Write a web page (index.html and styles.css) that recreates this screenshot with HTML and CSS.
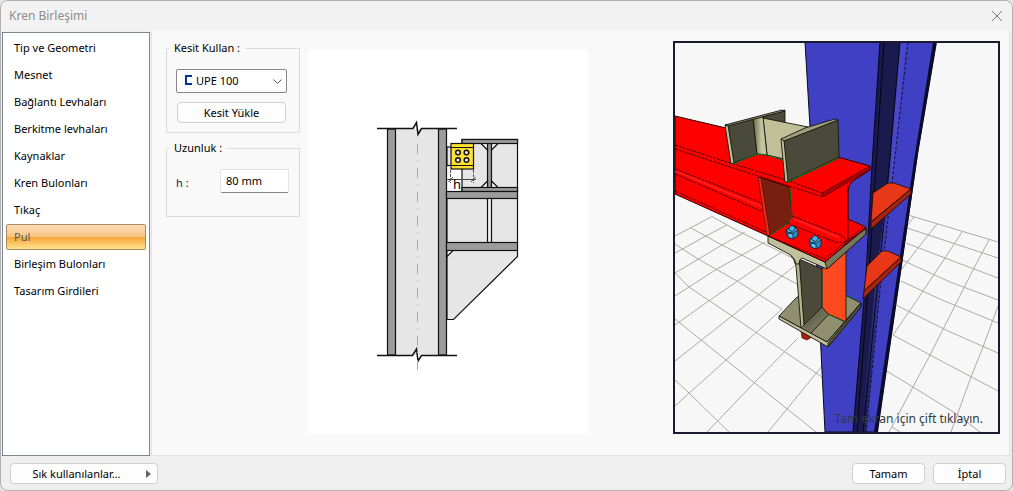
FILE: index.html
```html
<!DOCTYPE html>
<html lang="tr">
<head>
<meta charset="utf-8">
<title>Kren Birleşimi</title>
<link rel="stylesheet" href="styles.css">
</head>
<body>
<div class="dialog">
  <header class="titlebar">
    <h1 class="title">Kren Birleşimi</h1>
    <button class="close" type="button" aria-label="Kapat">
      <svg width="10" height="10" viewBox="0 0 10 10"><path d="M0 0L10 10M10 0L0 10" stroke="#777" fill="none"/></svg>
    </button>
  </header>
  <div class="body">
    <nav class="sidebar">
      <button class="tab" type="button">Tip ve Geometri</button>
      <button class="tab" type="button">Mesnet</button>
      <button class="tab" type="button">Bağlantı Levhaları</button>
      <button class="tab" type="button">Berkitme levhaları</button>
      <button class="tab" type="button">Kaynaklar</button>
      <button class="tab" type="button">Kren Bulonları</button>
      <button class="tab" type="button">Tıkaç</button>
      <button class="tab active" type="button">Pul</button>
      <button class="tab" type="button">Birleşim Bulonları</button>
      <button class="tab" type="button">Tasarım Girdileri</button>
    </nav>
    <main class="panel">
      <form class="settings">
        <fieldset class="group section-group">
          <legend>Kesit Kullan :</legend>
          <div class="combo">
            <svg class="combo-icon" width="7" height="10" viewBox="0 0 7 10"><path d="M7 1H1V9H7" fill="none" stroke="#003399" stroke-width="2"/></svg>
            <select class="combo-select" aria-label="Kesit Kullan"><option>UPE 100</option></select>
            <svg class="combo-arrow" width="9" height="5" viewBox="0 0 9 5"><path d="M.5 .5L4.500 4.500L8.500 .5" fill="none" stroke="#555"/></svg>
          </div>
          <button class="btn load" type="button">Kesit Yükle</button>
        </fieldset>
        <fieldset class="group length-group">
          <legend>Uzunluk :</legend>
          <div class="field">
            <label for="h">h :</label>
            <input id="h" class="text-input" type="text" value="80 mm">
          </div>
        </fieldset>
      </form>
      <div class="diagram">
        <svg width="280" height="384" viewBox="308 50 280 384">
          <g stroke="#111" stroke-width="1.2" stroke-linejoin="miter">
            <rect x="395" y="129" width="43" height="226" fill="#e6e6e6" stroke="none"/>
            <rect x="387.500" y="129" width="8" height="226" fill="#9c9c9c"/>
            <rect x="438.500" y="129" width="8" height="226" fill="#9c9c9c"/>
            <path d="M447 198.500H517.500V242.500H447ZM447 250.500H517.500V256.500L453.500 319.500H447Z" fill="#e6e6e6"/>
            <path d="M447 256.500L453 250.500H447Z" fill="#fff"/>
            <rect x="462" y="139.500" width="55.500" height="52" fill="#e6e6e6"/>
            <rect x="487.500" y="143" width="4" height="45" fill="#9c9c9c"/>
            <path d="M481 143.500H487.500V150ZM498 143.500H491.500V150ZM481 187.500H487.500V181ZM498 187.500H491.500V181Z" fill="#f8f8f8"/>
            <rect x="462" y="139.500" width="55.500" height="4" fill="#9c9c9c"/>
            <rect x="462" y="187.500" width="55.500" height="4" fill="#9c9c9c"/>
            <rect x="446.500" y="191.500" width="71" height="7" fill="#9c9c9c"/>
            <rect x="487.500" y="198.500" width="4" height="44" fill="#f0f0f0"/>
            <rect x="446.500" y="242.500" width="71" height="8" fill="#9c9c9c"/>
            <rect x="447" y="147" width="5" height="18.500" fill="#e6e6e6"/>
            <rect x="451" y="143.500" width="22.500" height="25.500" fill="#ffe032"/>
            <path d="M451 147.500H473.500M451 165.500H473.500"/>
            <g fill="#eee" stroke-width="1.500"><circle cx="458" cy="152.500" r="2.300"/><circle cx="466.500" cy="152.500" r="2.300"/><circle cx="458" cy="160" r="2.300"/><circle cx="466.500" cy="160" r="2.300"/></g>
          </g>
          <path d="M377 128.500H413L416.500 122.500L418 134.500L421.500 128.500H457M377 355.500H412.500L416.500 349L418 361L421.500 355.500H457" fill="none" stroke="#111" stroke-width="1.500"/>
          <path d="M417.500 144V373" stroke="#aaa" stroke-dasharray="10 6 1 7" fill="none"/>
          <path d="M446 179.500H476M448.500 182L453 177M471 182L475.500 177" stroke="#444" fill="none"/>
          <path d="M450.500 170V183M473.500 170V183" stroke="#555" stroke-dasharray="3 1" fill="none"/>
          <text x="453" y="189" class="dim">h</text>
        </svg>
      </div>
      <div class="viewport">
        <svg class="scene" viewBox="675 43 323 389">
          <defs>
            <linearGradient id="fillet" x1="0" x2="1"><stop offset="0" stop-color="#1a1a4c"/><stop offset=".7" stop-color="#4848c8"/></linearGradient>
            <linearGradient id="tan" x1="0" x2="1"><stop offset="0" stop-color="#66664e"/><stop offset=".6" stop-color="#c4c49e"/></linearGradient>
            <linearGradient id="root" x1="0" x2="1" y1="0" y2="1"><stop offset="0" stop-color="#4a4a3a"/><stop offset="1" stop-color="#909070"/></linearGradient>
            <g id="nut" stroke="#062030" stroke-width=".8"><path d="M-6 1L-5-3L2-5L6-2L6 4L1 7L-4 5Z" fill="#2c8cc0"/><path d="M-5-3L2-5L6-2L1 1L-5 0Z" fill="#60c4f0"/><path d="M-4 1L1 2V7L-4 5Z" fill="#58c0f0"/><path d="M-3-5Q0-8 3-5V-2Q0 1-3-2Z" fill="#48b0e4"/></g>
          </defs>
          <g fill="none" stroke="#a9aca5">
            <path d="M711 216L738 231L777 250L798 261M691 228L722 245L761 265L797 284M675 244L698 259L737 281L782 309M675 273L689 287L732 316L785 352L822 377M675 319L726 360L816 432M675 380L689 393L729 432"/>
            <path d="M675 236L711 217M675 253L706 236L727 225M675 273L722 245L745 232M675 296L717 269L765 242M675 325L710 300L761 265L782 252M675 361L732 316L797 264M675 406L726 360L782 309M707 432L754 383L798 338M768 432L787 409L822 366"/>
            <path d="M908 215L998 242M907 228L998 258M906 243L945 258L998 278M902 260L950 282L998 300M901 281L942 300L998 323M896 305L948 331L998 353M893 335L930 355L998 391M885 370L913 387L955 413L980 432M892 427L900 432"/>
            <path d="M914 217L906 227M937 224L918 248L901 270M962 232L945 258L917 300L893 335M989 240L974 268L930 355L889 432M998 306L983 347L971 377L951 432"/>
          </g>
          <path d="M805 42H936L918 150L877 432H825L810 127Z" fill="#4040c5" stroke="#08081c"/>
          <path d="M880 42H900L890 165L875 290L863 432H853L867 265L872 165Z" fill="#1a1a4c"/>
          <path d="M900 42H906L894 165L880 290L866 432H861L875 290L890 165Z" fill="url(#fillet)"/>
          <path d="M933 42H937L918 154L878 432H874L915 154Z" fill="#0c0c2a"/>
          <path d="M880 42L872 165L866 275L853 432M884 42L876 165L869 275L857 432M900 42L888 180L863 432" fill="none" stroke="#050515"/>
          <path d="M908 42L894 165L880 290L866 432" fill="none" stroke="#101034" stroke-dasharray="3 2"/>
          <g stroke="#180804" stroke-width=".8">
            <path d="M873 193L888 183H894L911 189L871 222Z" fill="#e83818"/><path d="M911 189V194L871 229V222Z" fill="#a42412"/>
            <path d="M867 266L882 251H888L901 257L864 291Z" fill="#e83818"/><path d="M901 257V262L863 299L864 291Z" fill="#a42412"/>
          </g>
          <path d="M801 331H812V337L807 340L802 338Z" fill="#a42010" stroke="#400" stroke-width=".6"/>
          <g stroke="#15150c" stroke-width=".9">
            <path d="M779 316L797 297L847 296L861 303L827 342Z" fill="#909070"/>
            <path d="M779 316L827 342L861 303V307L828 347L779 319Z" fill="#c0c09a"/>
            <path d="M828 343L861 303V307L828 347Z" fill="#55553f"/>
            <path d="M803 327L822 307L829 314L811 333Z" fill="url(#root)" stroke="none"/>
            <path d="M811 333L829 314" fill="none"/>
            <path d="M799 259L822 269V307L803 326Z" fill="#4a4a3a"/>
            <path d="M788 252L799 256L804 325L801 328L796 266Q795 259 788 252Z" fill="#b4b48e"/>
            <path d="M822 269L846 251V322L828 314L822 307Z" fill="#ff4a20"/>
            <path d="M768 236L825 262L866 228V234L827 269L802 258Q799 259 799 264H796Q795 257 787 253L768 243Z" fill="#c0c09a"/>
            <path d="M825 262L866 228V234L827 269Z" fill="#77775c"/>
          </g>
          <path d="M822 272V307M828 314L845 322M848 296L860 302" stroke="#086428" fill="none" stroke-dasharray="3 1"/>
          <path d="M675 116L726 128L838 157L870 166V170L853 181Q849 184 848 190V219L866 227L825 262L768 236L675 194Z" fill="#f00" stroke="#300000"/>
          <path d="M822 193L870 166V170L853 179L823 197Z" fill="#b00000" stroke="#400000" stroke-width=".7"/>
          <path d="M675 171L762 207M794 219L840 238" stroke="#ff1c1c" stroke-width="2" fill="none"/>
          <path d="M675 145L730 163L783 179L822 193M675 149L730 167L783 184L823 197M675 169L762 203M675 174L763 212M675 191L768 233M792 216L841 235L847 240M787 223L838 243L847 241L866 229M768 236L825 259L863 227" fill="none" stroke="#500000" stroke-dasharray="3 1"/>
          <path d="M848 186V240L844 245" fill="none" stroke="#500000"/>
          <path d="M759 177L789 187L792 216L788 223L768 236Z" fill="#78200f" stroke="#200" stroke-width=".8"/>
          <path d="M758 177L761 178L770 235L767 236Z" fill="#e03018" stroke="#400" stroke-width=".6"/>
          <path d="M790 188L792 216L788 223L770 235" fill="none" stroke="#087028"/>
          <g stroke="#15150c" stroke-width=".9">
            <path d="M763 117L785 110V123L763 119Z" fill="#4a4a3a"/>
            <path d="M763 118L808 127L782 140L784 159L767 155Z" fill="#c0c098"/>
            <path d="M728 125L753 118L757 154L733 163Z" fill="#4a4a3a"/>
            <path d="M753 118L763 117L767 155L757 154Z" fill="url(#tan)"/>
            <path d="M725 125L728 125L734 163L731 164Z" fill="#c0c098"/>
            <path d="M725 125L782 110L785 111L728 126Z" fill="#8e8e70"/>
            <path d="M784 140L838 120L839 157L787 182Z" fill="#4a4a3a"/>
            <path d="M781 139L784 140L788 182L785 182Z" fill="#c0c098"/>
            <path d="M781 139L805 128L835 119L838 120L784 141Z" fill="#a0a07e"/>
          </g>
          <path d="M733 164L757 154L767 155L783 160M788 182L839 158" fill="none" stroke="#087028" stroke-width="1.200"/>
          <use href="#nut" x="792" y="232"/><use href="#nut" x="815" y="242"/>
        </svg>
        <p class="hint">Tam ekran için çift tıklayın.</p>
      </div>
    </main>
  </div>
  <footer class="footer">
    <button class="btn favourites" type="button"><span class="fav-label">Sık kullanılanlar…</span>
      <svg width="5" height="8" viewBox="0 0 5 8"><path d="M0 0L5 4L0 8Z" fill="#666"/></svg>
    </button>
    <button class="btn action" type="button">Tamam</button>
    <button class="btn action" type="button">İptal</button>
  </footer>
</div>
</body>
</html>
```
FILE: styles.css
```css
* { box-sizing: border-box; }
body {
  margin: 0;
  background: #e4e4e4;
  font: 11px/16px "Noto Sans", "Open Sans", sans-serif;
  color: #000;
}
button, input, select { font: inherit; color: inherit; }
.dialog {
  display: flex;
  flex-direction: column;
  min-height: 100vh;
  border: 1px solid #b0b0b0;
  border-radius: 8px;
  background: #efefef;
  overflow: hidden;
}
.titlebar {
  display: flex;
  align-items: center;
  justify-content: space-between;
  height: 30px;
  padding: 0 10px 0 8px;
  background: #f2f2f2;
}
.title { margin: 0; font-size: 12px; font-weight: 400; color: #8c8c8c; }
.close { display: flex; padding: 0; border: 0; background: none; }
.body { display: flex; flex: 1; padding: 0 2px 0 1px; }
.sidebar {
  display: flex;
  flex-direction: column;
  gap: 1px;
  width: 148px;
  margin: 1px 1px 0 0;
  padding: 2px 3px;
  border: 1px solid #7f858f;
  background: #fff;
}
.tab {
  height: 26px;
  padding: 0 7px;
  border: 1px solid transparent;
  border-radius: 2px;
  background: none;
  text-align: left;
}
.tab.active {
  border-color: #a98a5c;
  background: linear-gradient(#fbdcb8, #fbc383 50%, #f9a63c 52%, #fde38e);
  color: #555;
}
.panel {
  display: flex;
  align-items: flex-start;
  flex: 1;
  padding: 9px 9px 21px 14px;
  border: 1px solid #e3e3e3;
  border-top: 0;
  background: #f9f9f9;
}
.settings { width: 134px; }
.group {
  min-width: 0;
  margin: 0;
  padding: 13px 10px 7px 9px;
  border: 1px solid #dcdcdc;
}
.group legend { margin-left: -7px; padding: 0 5px; }
.section-group { margin-bottom: 7px; }
.length-group { height: 77px; }
.combo { position: relative; width: 111px; }
.combo-select {
  display: block;
  width: 100%;
  height: 24px;
  padding: 0 20px 0 19px;
  border: 1px solid #868686;
  border-radius: 2px;
  background: #fff;
  appearance: none;
}
.combo-icon { position: absolute; left: 9px; top: 6px; }
.combo-arrow { position: absolute; right: 5px; top: 10px; pointer-events: none; }
.btn {
  height: 21px;
  padding: 0 6px;
  border: 1px solid #cfcfcf;
  border-radius: 4px;
  background: #fdfdfd;
}
.load { display: block; width: 109px; margin: 9px 0 2px 1px; }
.field { display: flex; justify-content: space-between; }
.field label { padding-top: 6px; color: #1a1a4c; }
.text-input {
  width: 69px;
  height: 24px;
  padding: 0 5px 2px;
  border: 1px solid #e2e2e2;
  border-bottom-color: #868686;
  border-radius: 2px;
  background: #fff;
}
.diagram { display: flex; margin: 10px 20px 0 8px; background: #fff; }
.dim { font: 13px "Noto Sans", sans-serif; }
.viewport {
  position: relative;
  width: 327px;
  margin: 1px 0 0 auto;
  border: 2px solid #1a1a30;
  background: #f7f7f7;
}
.scene { display: block; width: 100%; }
.hint { position: absolute; right: 15px; bottom: 5px; margin: 0; font-size: 12px; color: #2e3c44; }
.footer {
  display: flex;
  align-items: center;
  gap: 8px;
  padding: 7px 6px 6px 9px;
}
.favourites { display: flex; align-items: center; width: 148px; margin-right: auto; }
.fav-label { flex: 1; padding-right: 10px; }
.action { width: 73px; }
```
